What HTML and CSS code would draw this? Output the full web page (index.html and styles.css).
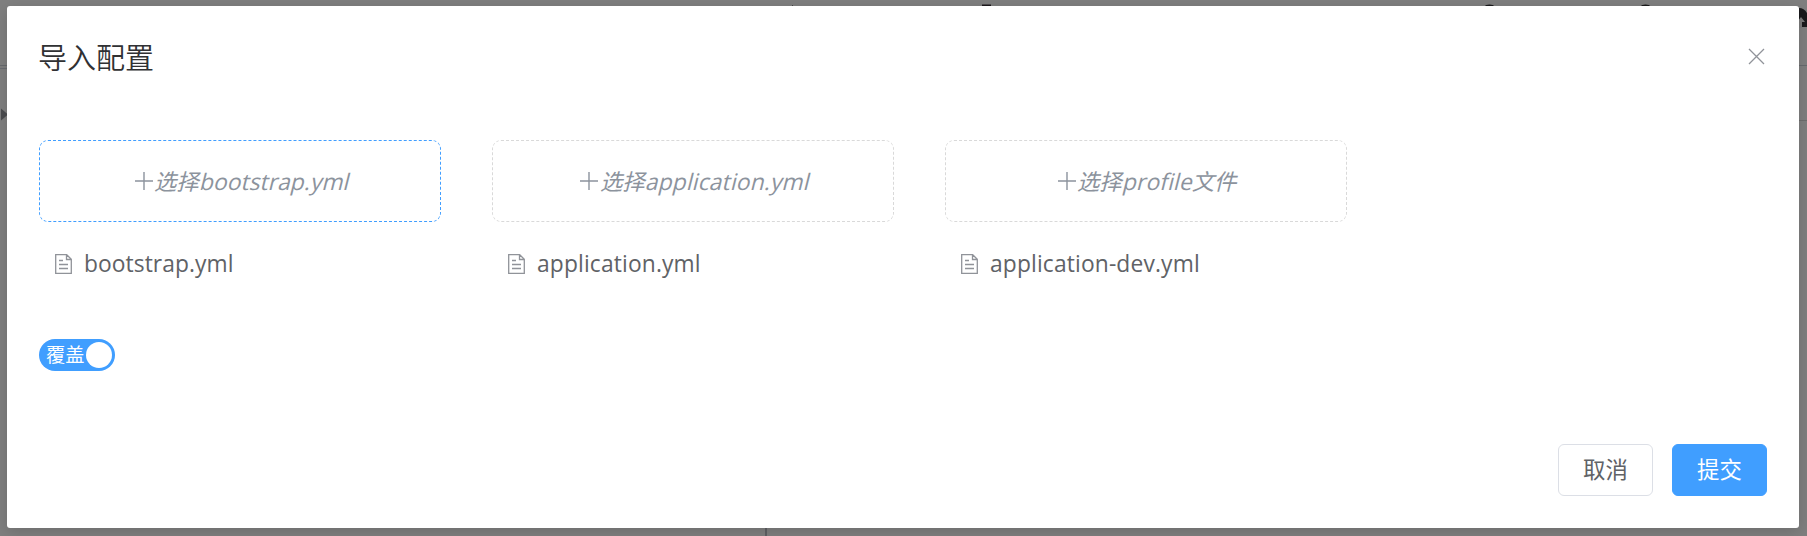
FILE: index.html
```html
<!DOCTYPE html>
<html lang="zh-CN">
<head>
<meta charset="utf-8">
<title>导入配置</title>
<link rel="stylesheet" href="styles.css">
</head>
<body>
<svg class="backdrop" width="1807" height="536" viewBox="0 0 1807 536">
  <path d="M0 65.5h1807" stroke="#676a6e"/>
  <path d="M0 68.5h20" stroke="#6a6d73"/>
  <path d="M1780 120.5h27" stroke="#6d6d6d"/>
  <path d="M1 108.500l7 6l-7 6z" fill="#4b4c4f"/>
  <path d="M766 528v8" stroke="#5f6064" stroke-width="2"/>
  <path d="M982 5.500h9" stroke="#1c181c" stroke-width="2"/>
  <path d="M792 5.500h1" stroke="#444"/>
  <circle cx="1489.500" cy="13" r="8.500" fill="#1a1a1c"/>
  <circle cx="1645.500" cy="13" r="8.500" fill="#1a1a1c"/>
  <path d="M1799 8q5 0 8 5v14h-8z" fill="#1a1a1c"/>
  <path d="M1797 22l4-5l4 5h-3v6h-4z" fill="#7b7b7b"/>
</svg>
<main class="dialog">
  <header class="head">
    <h1 class="title">导入配置</h1>
    <svg class="close" width="17" height="17" viewBox="0 0 17 17"><path d="M1 1l15 15M16 1L1 16"/></svg>
  </header>
  <section class="uploads">
    <div class="upload">
      <div class="drop active"><svg class="plus" width="18" height="18" viewBox="0 0 18 18"><path d="M0 9h18M9 0v18"/></svg><span class="pick">选择<span class="latin boot">bootstrap.yml</span></span></div>
      <div class="file"><svg class="doc" width="17" height="20" viewBox="0 0 17 20"><path d="M.7.700h11l4.600 4.600v14H.7zM11.500.700v4.800h4.800M4 6.500h4M4 10.500h9M4 14.500h9"/></svg><span class="latin boot">bootstrap.yml</span></div>
    </div>
    <div class="upload">
      <div class="drop"><svg class="plus" width="18" height="18" viewBox="0 0 18 18"><path d="M0 9h18M9 0v18"/></svg><span class="pick">选择<span class="latin">application.yml</span></span></div>
      <div class="file"><svg class="doc" width="17" height="20" viewBox="0 0 17 20"><path d="M.7.700h11l4.600 4.600v14H.7zM11.500.700v4.800h4.800M4 6.500h4M4 10.500h9M4 14.500h9"/></svg><span class="latin">application.yml</span></div>
    </div>
    <div class="upload">
      <div class="drop"><svg class="plus" width="18" height="18" viewBox="0 0 18 18"><path d="M0 9h18M9 0v18"/></svg><span class="pick">选择<span class="latin">profile</span>文件</span></div>
      <div class="file"><svg class="doc" width="17" height="20" viewBox="0 0 17 20"><path d="M.7.700h11l4.600 4.600v14H.7zM11.500.700v4.800h4.800M4 6.500h4M4 10.500h9M4 14.500h9"/></svg><span class="latin">application-dev.yml</span></div>
    </div>
  </section>
  <div class="switch"><span>覆盖</span><i class="knob"></i></div>
  <footer class="foot">
    <button class="btn">取消</button>
    <button class="btn primary">提交</button>
  </footer>
</main>
</body>
</html>
```
FILE: styles.css
```css
* { box-sizing: border-box; }
body {
  margin: 0;
  height: 536px;
  padding: 6px 8px 8px 7px;
  overflow: hidden;
  background: #7f7f7f;
  font-family: "Open Sans", "Noto Sans CJK SC", sans-serif;
  font-size: 22.4px;
  color: #606266;
}
.backdrop { position: absolute; left: 0; top: 0; fill: none; }
.dialog {
  position: relative;
  display: flex;
  flex-direction: column;
  width: 1792px;
  height: 522px;
  padding: 30px 32px 32px;
  background: #fff;
  border-radius: 3px;
  box-shadow: 0 4px 16px rgba(0, 0, 0, .15);
}
.head { display: flex; justify-content: space-between; height: 104px; }
.title {
  margin: 0 0 0 -1px;
  font-family: "Noto Sans CJK SC", sans-serif;
  font-size: 29px;
  font-weight: 350;
  line-height: 40px;
  color: #303133;
}
.close { margin: 11.5px 2.5px 0 0; fill: none; stroke: #909399; stroke-width: 1.300; }
.uploads { display: flex; gap: 51px; }
.upload { width: 402px; }
.drop {
  display: flex;
  align-items: center;
  justify-content: center;
  height: 82px;
  padding-left: 5px;
  border: 1px dashed #d9d9d9;
  border-radius: 9px;
  color: #8c939d;
}
.drop.active { border-color: #409eff; }
.plus { margin-right: 3.5px; fill: none; stroke: #8c939d; stroke-width: 1.400; }
.pick { display: inline-block; padding-bottom: 2px; transform: skewX(-14deg); white-space: nowrap; }
.latin { font-size: 22.8px; letter-spacing: .15px; }
.boot { letter-spacing: .06px; }
.file { display: flex; align-items: center; height: 40px; margin-top: 22px; padding-left: 15.5px; }
.file .latin { padding-bottom: 2px; }
.doc { margin-right: 12.5px; fill: none; stroke: #909399; stroke-width: 1.300; }
.switch {
  display: flex;
  align-items: center;
  justify-content: space-between;
  width: 76px;
  height: 32px;
  margin-top: 55px;
  padding: 0 3px 0 7px;
  border-radius: 16px;
  background: #409eff;
  color: #fff;
  font-size: 19.200px;
  line-height: 32px;
}
.knob { width: 26px; height: 26px; border-radius: 50%; background: #fff; }
.foot { display: flex; justify-content: flex-end; gap: 19px; margin-top: 73px; }
.btn {
  width: 95px;
  height: 52px;
  padding: 0 0 3px;
  border: 1px solid #dcdfe6;
  border-radius: 6px;
  background: #fff;
  color: #606266;
  font: 22.400px/1 "Noto Sans CJK SC", sans-serif;
}
.primary { border-color: #409eff; background: #409eff; color: #fff; }
```
